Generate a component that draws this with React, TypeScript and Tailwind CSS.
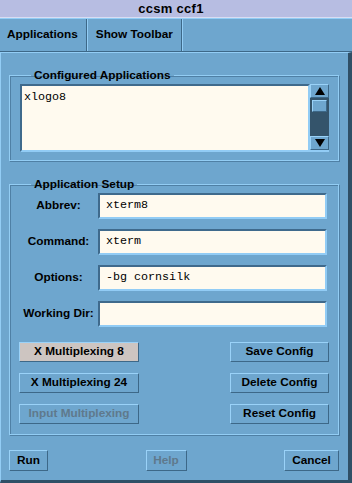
import React from 'react'

// Motif style edges
const raised = 'border border-t-[#9ad2f8] border-l-[#9ad2f8] border-b-[#3d6888] border-r-[#3d6888]'
const sunken = 'border-2 border-t-[#3f6a8c] border-l-[#3f6a8c] border-b-[#92ccf5] border-r-[#92ccf5]'

function Frame({ title, children }: { title: string; children: React.ReactNode }) {
  return (
    <fieldset className="border border-[#93cdf4] shadow-[inset_1px_1px_0_#4f80a5,1px_1px_0_#4f80a5]">
      <legend className="ml-[21px] px-[3px] leading-[16px]">{title}</legend>
      {children}
    </fieldset>
  )
}

function Btn({ label, className = '', disabled = false }: { label: string; className?: string; disabled?: boolean }) {
  return (
    <button
      type="button"
      className={`h-[20px] flex items-center justify-center leading-none ${raised} ${disabled ? 'text-[#5f798c]' : 'text-black'} ${className}`}
    >
      {label}
    </button>
  )
}

function Arrow({ up }: { up: boolean }) {
  return (
    <div className={`h-[14px] flex items-center justify-center bg-[#6ea6ce] ${raised}`}>
      <svg width="10" height="8" viewBox="0 0 10 8">
        {up ? <polygon points="5,0 10,8 0,8" fill="#000" /> : <polygon points="0,0 10,0 5,8" fill="#000" />}
      </svg>
    </div>
  )
}

export default function App() {
  const fields = [
    { label: 'Abbrev:', value: 'xterm8' },
    { label: 'Command:', value: 'xterm' },
    { label: 'Options:', value: '-bg cornsilk' },
    { label: 'Working Dir:', value: '' },
  ]
  return (
    <div className="w-[352px] h-[483px] flex flex-col bg-[#6ea6ce] font-['Liberation_Sans',Arial,sans-serif] text-[11.8px] font-bold text-black overflow-hidden">
      <div className="h-[18px] shrink-0 bg-[#b7bde2] border-b border-[#d9ddf2] flex items-center justify-center pr-[10px] text-[13px] tracking-[0.3px]">
        ccsm ccf1
      </div>
      <div className="h-[34px] shrink-0 flex border-t border-[#93cdf5] border-b border-b-[#3d6888]">
        <div className="pl-[7px] pr-[8px] flex items-center border-r border-r-[#3d6888] shadow-[1px_0_0_#93cdf5]">Applications</div>
        <div className="pl-[9px] pr-[8px] flex items-center border-r border-r-[#3d6888] shadow-[1px_0_0_#93cdf5]">Show Toolbar</div>
      </div>

      <div className="flex-1 flex flex-col border-t border-l border-t-[#93cdf5] border-l-[#93cdf5] border-r-4 border-r-[#2f4f66] border-b-[3px] border-b-[#2f4f66] pl-[8px] pr-[9px]">
        <div className="mt-[14px]">
          <Frame title="Configured Applications">
            <div className="flex pl-[10px] pr-[9px] pt-[1px] pb-[8px]">
              <div className={`w-[290px] h-[68px] bg-[#fffaef] ${sunken} px-[2px] pt-[3px] font-['Liberation_Mono',monospace] font-normal text-[11.7px] leading-[16px]`}>
                xlogo8
              </div>
              <div className="w-[19px] h-[68px] flex flex-col bg-[#34546b] border-b-2 border-b-[#92ccf5]">
                <Arrow up />
                <div className="flex-1 px-[2px] pt-[2px]">
                  <div className={`h-[12px] bg-[#6ea6ce] ${raised}`} />
                </div>
                <Arrow up={false} />
              </div>
            </div>
          </Frame>
        </div>

        <div className="mt-[15px]">
          <Frame title="Application Setup">
            <div className="flex flex-col gap-[10px] pt-[1px] pl-[9px]">
              {fields.map(f => (
                <div key={f.label} className="flex items-center h-[26px]">
                  <div className="w-[79px] text-center">{f.label}</div>
                  <div className={`w-[229px] h-[26px] bg-[#fffaef] ${sunken} px-[6px] flex items-center font-['Liberation_Mono',monospace] font-normal text-[11.7px]`}>
                    {f.value}
                  </div>
                </div>
              ))}
            </div>
            <div className="flex justify-between pl-[9px] pr-[9px] mt-[15px] pb-[10px]">
              <div className="flex flex-col gap-[11px]">
                <Btn label="X Multiplexing 8" className="w-[120px] bg-[#cdc5c1]" />
                <Btn label="X Multiplexing 24" className="w-[120px] bg-[#6ea6ce]" />
                <Btn label="Input Multiplexing" className="w-[120px] bg-[#6ea6ce]" disabled />
              </div>
              <div className="flex flex-col gap-[11px]">
                <Btn label="Save Config" className="w-[99px] bg-[#6ea6ce]" />
                <Btn label="Delete Config" className="w-[99px] bg-[#6ea6ce]" />
                <Btn label="Reset Config" className="w-[99px] bg-[#6ea6ce]" />
              </div>
            </div>
          </Frame>
        </div>

        <div className="flex justify-between mt-[15px]">
          <Btn label="Run" className="w-[39px] h-[21px] bg-[#6ea6ce]" />
          <Btn label="Help" className="w-[41px] h-[21px] bg-[#6ea6ce]" disabled />
          <Btn label="Cancel" className="w-[55px] h-[21px] bg-[#6ea6ce]" />
        </div>
      </div>
    </div>
  )
}
